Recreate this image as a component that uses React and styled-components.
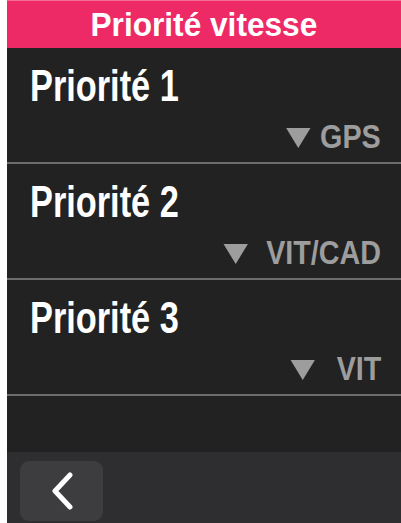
import React from 'react';
import styled, { createGlobalStyle } from 'styled-components';

const GlobalStyle = createGlobalStyle`
    html, body {
        margin: 0;
        padding: 0;
        background: #ffffff;
    }
    body {
        font-family: 'Liberation Sans', Arial, sans-serif;
    }
`;

const Screen = styled.div`
    margin-left: 7px;
    width: 394px;
    height: 523px;
    display: flex;
    flex-direction: column;
    background-color: #222222;
    overflow: hidden;
`;

const Header = styled.header`
    height: 48px;
    flex-shrink: 0;
    display: flex;
    align-items: center;
    justify-content: center;
    background-color: #ee2a66;
    border-top: 1px solid #f56b93;
    box-sizing: border-box;
`;

const Title = styled.h1`
    margin: 0 0 1px;
    color: #ffffff;
    font-size: 34px;
    font-weight: 700;
    line-height: 1;
    transform: scaleX(0.93);
`;

const List = styled.ul`
    margin: 0;
    padding: 0;
    list-style: none;
    flex: 1;
`;

const Row = styled.li`
    display: flex;
    flex-direction: column;
    align-items: flex-start;
    padding: 16px 20px 9px 23px;
    border-bottom: 2px solid #6c6c6c;
`;

/* the device font is condensed, squeeze Arial to the same width */
const Label = styled.span`
    display: inline-block;
    color: #ffffff;
    font-size: 44px;
    font-weight: 700;
    line-height: 44px;
    transform: scaleX(0.78);
    transform-origin: left center;
`;

const Value = styled.span`
    margin-top: 12px;
    align-self: flex-end;
    display: flex;
    align-items: center;
    gap: ${(p) => p.gap}px;
    color: #9d9d9d;
    font-size: 33px;
    font-weight: 700;
    line-height: 33px;
    transform: scaleX(0.87);
    transform-origin: right center;
`;

const Arrow = styled.span`
    width: 0;
    height: 0;
    margin-top: 2px;
    border-left: 14px solid transparent;
    border-right: 14px solid transparent;
    border-top: 20px solid #9d9d9d;
`;

const BottomBar = styled.footer`
    height: 71px;
    flex-shrink: 0;
    display: flex;
    align-items: center;
    padding-left: 13px;
    box-sizing: border-box;
    background-color: #2e2e30;
`;

const BackButton = styled.button`
    width: 83px;
    height: 60px;
    margin-top: 6px;
    display: flex;
    align-items: center;
    justify-content: center;
    padding: 0;
    border: none;
    border-radius: 9px;
    background-color: #3d3d40;
`;

const priorities = [
    { id: 1, value: 'GPS', gap: 11 },
    { id: 2, value: 'VIT/CAD', gap: 21 },
    { id: 3, value: 'VIT', gap: 25 },
];

function App() {
    return (
        <>
            <GlobalStyle />
            <Screen>
                <Header>
                    <Title>Priorité vitesse</Title>
                </Header>
                <List>
                    {priorities.map((item) => (
                        <Row key={item.id}>
                            <Label>Priorité {item.id}</Label>
                            <Value gap={item.gap}>
                                <Arrow />
                                {item.value}
                            </Value>
                        </Row>
                    ))}
                </List>
                <BottomBar>
                    <BackButton aria-label='Retour'>
                        <svg width='24' height='38' viewBox='0 0 24 38'>
                            <path
                                d='M20 3 L5 19 L20 35'
                                fill='none'
                                stroke='#ffffff'
                                strokeWidth='5'
                                strokeLinecap='round'
                                strokeLinejoin='round'
                            />
                        </svg>
                    </BackButton>
                </BottomBar>
            </Screen>
        </>
    );
}

export default App;
